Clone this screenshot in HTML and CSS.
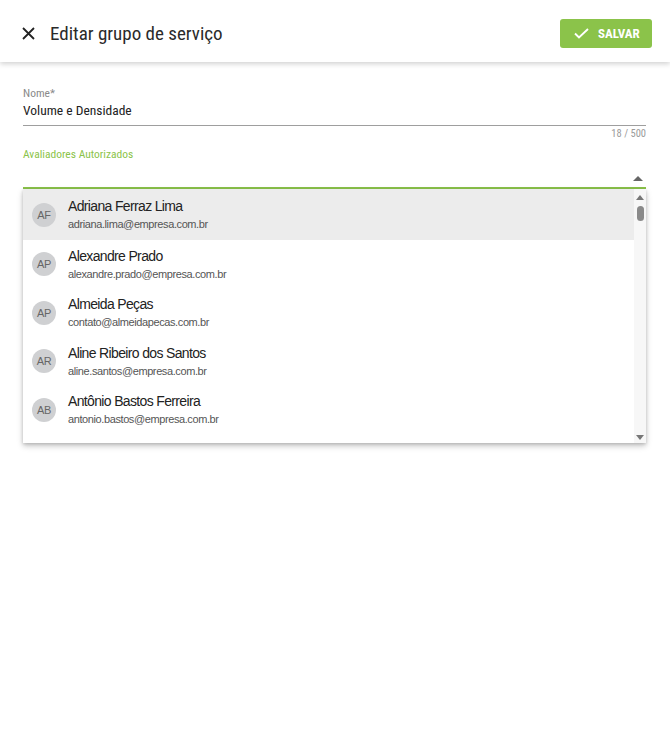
FILE: index.html
```html
<!DOCTYPE html>
<html lang="pt-BR">
<head>
<meta charset="utf-8">
<link rel="stylesheet" href="styles.css">
</head>
<body>
<header class="topbar">
  <div class="title-wrap">
    <button class="close-btn" aria-label="Fechar">
      <svg width="13" height="13" viewBox="0 0 13 13"><path d="M1 1L12 12M12 1L1 12" stroke="#222" stroke-width="1.8" fill="none"/></svg>
    </button>
    <h1 class="title">Editar grupo de serviço</h1>
  </div>
  <button class="save-btn">
    <svg width="15" height="11" viewBox="0 0 15 11"><path d="M1 5.5L5 9.5L14 1" stroke="#fff" stroke-width="1.9" fill="none"/></svg>
    <span>SALVAR</span>
  </button>
</header>

<main class="content">
  <div class="field">
    <label class="field-label">Nome*</label>
    <div class="field-value">Volume e Densidade</div>
    <div class="field-line"></div>
    <div class="counter">18 / 500</div>
  </div>

  <div class="field select-field">
    <label class="field-label green">Avaliadores Autorizados</label>
    <div class="select-row">
      <span class="caret-up"></span>
    </div>
    <div class="field-line active"></div>

    <div class="dropdown">
      <ul class="options">
        <li class="option highlighted">
          <span class="avatar">AF</span>
          <div class="opt-text"><div class="opt-name">Adriana Ferraz Lima</div><div class="opt-email">adriana.lima@empresa.com.br</div></div>
        </li>
        <li class="option">
          <span class="avatar">AP</span>
          <div class="opt-text"><div class="opt-name">Alexandre Prado</div><div class="opt-email">alexandre.prado@empresa.com.br</div></div>
        </li>
        <li class="option">
          <span class="avatar">AP</span>
          <div class="opt-text"><div class="opt-name">Almeida Peças</div><div class="opt-email">contato@almeidapecas.com.br</div></div>
        </li>
        <li class="option">
          <span class="avatar">AR</span>
          <div class="opt-text"><div class="opt-name">Aline Ribeiro dos Santos</div><div class="opt-email">aline.santos@empresa.com.br</div></div>
        </li>
        <li class="option">
          <span class="avatar">AB</span>
          <div class="opt-text"><div class="opt-name">Antônio Bastos Ferreira</div><div class="opt-email">antonio.bastos@empresa.com.br</div></div>
        </li>
      </ul>
      <div class="scrollbar">
        <span class="sb-up"></span>
        <span class="sb-thumb"></span>
        <span class="sb-space"></span>
        <span class="sb-down"></span>
      </div>
    </div>
  </div>
</main>
</body>
</html>
```

FILE: styles.css
```css
* { box-sizing: border-box; }
html, body { margin: 0; padding: 0; }
body {
  width: 670px;
  height: 730px;
  background: #fff;
  font-family: Roboto, "Liberation Sans", sans-serif;
  font-stretch: 87%;
  color: #222;
  overflow: hidden;
}
.topbar {
  height: 62px;
  display: flex;
  align-items: center;
  justify-content: space-between;
  padding: 0 18px 0 22px;
  background: #fff;
  box-shadow: 0 2px 5px rgba(0,0,0,0.18);
  position: relative;
  z-index: 2;
}
.title-wrap { display: flex; align-items: center; margin-top: 4px; }
.close-btn {
  border: 0; background: none; padding: 0;
  width: 13px; height: 13px;
  display: flex;
  margin-right: 15px;
}
.title {
  margin: 0;
  font-size: 19px;
  font-weight: 400;
  color: #2a2a2a;
  font-stretch: 87%;
}
.save-btn {
  display: flex;
  align-items: center;
  gap: 9px;
  height: 29px;
  width: 92px;
  margin-top: 4px;
  padding: 0 0 0 14px;
  border: 0;
  border-radius: 3px;
  background: #8bc34a;
  color: #fff;
  font-family: Roboto, sans-serif;
  font-stretch: 87%;
  font-weight: 700;
  font-size: 13px;
}
.content {
  padding: 25px 24px 0 23px;
}
.field { position: relative; }
.field-label {
  display: block;
  font-size: 11.5px;
  color: #8a8a8a;
  line-height: 12px;
}
.field-label.green { color: #8bc34a; font-size: 11.5px; }
.field-value {
  font-size: 13.5px;
  color: #222;
  margin-top: 3px;
  line-height: 16px;
  height: 23px;
}
.field-line { height: 1px; background: #9e9e9e; }
.field-line.active { height: 2px; background: #8bc34a; }
.counter {
  text-align: right;
  font-size: 10.5px;
  color: #9a9a9a;
  margin-top: 2px;
  line-height: 12px;
}
.select-field { margin-top: 8px; }
.select-row {
  height: 27px;
  display: flex;
  justify-content: flex-end;
  align-items: flex-end;
  padding-right: 3px;
  padding-bottom: 6px;
}
.caret-up {
  width: 0; height: 0;
  border-left: 5px solid transparent;
  border-right: 5px solid transparent;
  border-bottom: 5px solid #666;
}
.dropdown {
  display: flex;
  height: 254px;
  background: #fff;
  box-shadow: 0 3px 6px rgba(0,0,0,0.22), 0 1px 3px rgba(0,0,0,0.15);
  overflow: hidden;
}
.options {
  list-style: none;
  margin: 0;
  padding: 0;
  flex: 1;
  font-family: "Liberation Sans", Arial, sans-serif;
}
.option {
  height: 48.5px;
  display: flex;
  align-items: center;
  padding-left: 9px;
}
.option.highlighted { background: #ececec; height: 51px; }
.avatar {
  width: 24px; height: 24px;
  border-radius: 50%;
  background: #cfd0d2;
  color: #666;
  font-size: 11px;
  letter-spacing: -0.3px;
  display: flex;
  align-items: center;
  justify-content: center;
  margin-right: 12px;
  flex-shrink: 0;
}
.opt-name {
  font-size: 14px;
  color: #222;
  line-height: 17px;
  letter-spacing: -0.65px;
}
.opt-email {
  font-size: 11px;
  color: #555;
  margin-top: 2px;
  line-height: 14px;
  letter-spacing: -0.4px;
}
.scrollbar {
  width: 12px;
  background: #f7f7f7;
  display: flex;
  flex-direction: column;
  align-items: center;
  padding-top: 6px;
  padding-bottom: 3px;
}
.sb-up {
  width: 0; height: 0;
  border-left: 4px solid transparent;
  border-right: 4px solid transparent;
  border-bottom: 5px solid #777;
}
.sb-thumb {
  width: 7px;
  height: 15px;
  margin-top: 6px;
  border-radius: 4px;
  background: #8a8a8a;
}
.sb-space { flex: 1; }
.sb-down {
  width: 0; height: 0;
  border-left: 4px solid transparent;
  border-right: 4px solid transparent;
  border-top: 5px solid #777;
}
```
